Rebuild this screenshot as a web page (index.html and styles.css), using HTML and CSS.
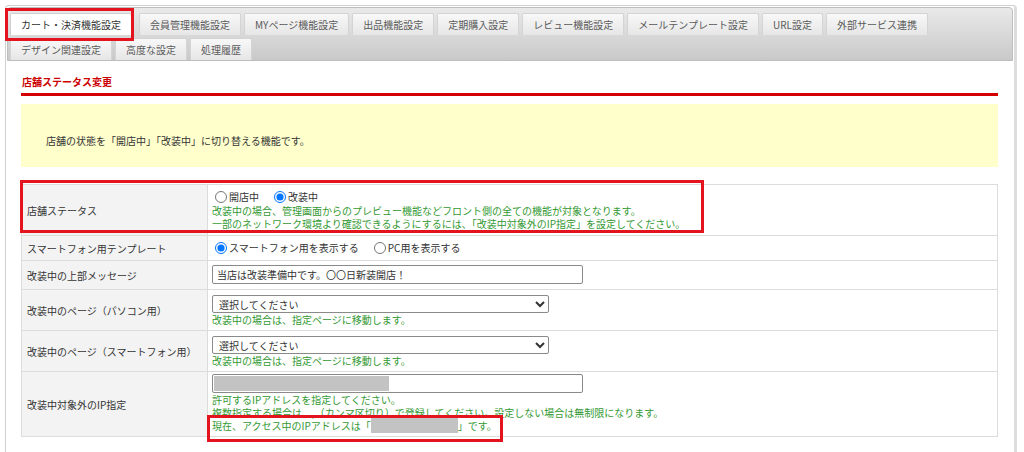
FILE: index.html
```html
<!DOCTYPE html>
<html lang="ja">
<head>
<meta charset="utf-8">
<title>店舗ステータス変更</title>
<link rel="stylesheet" href="styles.css">
</head>
<body>
<div class="page">
  <div class="tabbar">
    <div class="tabrow">
      <div class="tab active">カート・決済機能設定</div>
      <div class="tab gap-after-active">会員管理機能設定</div>
      <div class="tab">MYページ機能設定</div>
      <div class="tab">出品機能設定</div>
      <div class="tab">定期購入設定</div>
      <div class="tab">レビュー機能設定</div>
      <div class="tab">メールテンプレート設定</div>
      <div class="tab">URL設定</div>
      <div class="tab">外部サービス連携</div>
    </div>
    <div class="tabrow">
      <div class="tab">デザイン関連設定</div>
      <div class="tab">高度な設定</div>
      <div class="tab">処理履歴</div>
    </div>
  </div>

  <div class="content">
    <h2 class="title">店舗ステータス変更</h2>
    <div class="notice">店舗の状態を「開店中」「改装中」に切り替える機能です。</div>

    <table class="form">
      <tr class="r1">
        <th>店舗ステータス</th>
        <td>
          <div class="radios">
            <label><input type="radio" name="st">開店中</label>
            <label><input type="radio" name="st" checked>改装中</label>
          </div>
          <p class="note">改装中の場合、管理画面からのプレビュー機能などフロント側の全ての機能が対象となります。</p>
          <p class="note">一部のネットワーク環境より確認できるようにするには、「改装中対象外のIP指定」を設定してください。</p>
        </td>
      </tr>
      <tr class="r2">
        <th>スマートフォン用テンプレート</th>
        <td>
          <div class="radios">
            <label><input type="radio" name="tp" checked>スマートフォン用を表示する</label>
            <label><input type="radio" name="tp">PC用を表示する</label>
          </div>
        </td>
      </tr>
      <tr class="r3">
        <th>改装中の上部メッセージ</th>
        <td><input class="text" type="text" value="当店は改装準備中です。〇〇日新装開店！"></td>
      </tr>
      <tr class="r4">
        <th>改装中のページ（パソコン用）</th>
        <td>
          <select class="sel"><option>選択してください</option></select>
          <p class="note">改装中の場合は、指定ページに移動します。</p>
        </td>
      </tr>
      <tr class="r4">
        <th>改装中のページ（スマートフォン用）</th>
        <td>
          <select class="sel"><option>選択してください</option></select>
          <p class="note">改装中の場合は、指定ページに移動します。</p>
        </td>
      </tr>
      <tr class="r6">
        <th>改装中対象外のIP指定</th>
        <td>
          <div class="ipbox"><span class="redact-in"></span></div>
          <p class="note">許可するIPアドレスを指定してください。</p>
          <p class="note">複数指定する場合は、,（カンマ区切り）で登録してください。設定しない場合は無制限になります。</p>
          <p class="note">現在、アクセス中のIPアドレスは「<span class="redact-txt"></span>」です。</p>
        </td>
      </tr>
    </table>
  </div>

  <div class="mark mark-tab"></div>
  <div class="mark mark-row"></div>
  <div class="mark mark-ip"></div>
</div>
</body>
</html>
```

FILE: styles.css
```css
* { box-sizing: border-box; }

html, body {
  margin: 0;
  padding: 0;
  background: #fff;
}

body {
  font-family: "Noto Sans CJK JP", "Noto Sans", sans-serif;
  font-size: 10px;
  line-height: 13px;
  color: #333;
}

.page {
  position: relative;
  margin: 5px 0 0 5px;
  width: 1012px;
  height: 460px;
  border: 1px solid #cfcfcf;
  border-right: 3px solid #dcdcdc;
  border-bottom: none;
  border-radius: 4px 4px 0 0;
  padding: 1px 1px 0 1px;
}

/* ---------- tabs ---------- */
.tabbar {
  background: linear-gradient(#e9e9e9, #c9c9c9);
  border: 1px solid #bdbdbd;
  border-radius: 4px 4px 0 0;
  padding: 5px 3px 0 2px;
  display: flex;
  flex-direction: column;
  gap: 3px;
}

.tabrow {
  display: flex;
  gap: 3px;
}

.tab {
  height: 22px;
  line-height: 22px;
  padding: 0 10px;
  color: #5a5a5a;
  background: linear-gradient(#f8f8f8, #e6e6e6);
  border: 1px solid #d4d4d4;
  border-bottom: none;
  border-radius: 2px 2px 0 0;
  white-space: nowrap;
}

.tab.active {
  background: #fff;
  color: #333;
  border-color: #d0d0d0;
}

.tab.gap-after-active {
  margin-left: 4px;
}

/* ---------- content ---------- */
.content {
  padding: 0 15px 0 14px;
}

.title {
  margin: 14px 0 0 0;
  padding: 0 0 5px 1px;
  font-size: 10px;
  line-height: 13px;
  font-weight: bold;
  color: #cc0000;
  border-bottom: 3px solid #d40000;
}

.notice {
  margin-top: 8px;
  height: 63px;
  padding: 30px 25px 0 25px;
  background: #ffffcc;
  color: #333;
}

.form {
  margin-top: 17px;
  width: 100%;
  border-collapse: collapse;
  border: 1px solid #dcdcdc;
}

.form th,
.form td {
  border: 1px solid #dcdcdc;
  vertical-align: middle;
  text-align: left;
  font-weight: normal;
}

.form th {
  width: 186px;
  background: #f3f3f3;
  padding: 0 5px;
  color: #333;
}

.form td {
  padding: 5px 5px 5px 4px;
}

.form tr.r3 td {
  padding-top: 4px;
}

.form tr.r4 td {
  padding-bottom: 4px;
}

.form tr.r6 td {
  padding-top: 2px;
  padding-bottom: 4px;
}

.radios {
  height: 14px;
  line-height: 14px;
  display: flex;
  align-items: center;
  white-space: nowrap;
}

.radios label {
  display: inline-flex;
  align-items: center;
  margin-right: 12px;
}

.radios input {
  width: 12px;
  height: 12px;
  margin: 0 2px 0 3px;
}

.note {
  margin: 0;
  height: 13px;
  color: #339933;
  white-space: nowrap;
}

.text {
  display: block;
  width: 371px;
  height: 19px;
  margin: 0;
  padding: 0 4px;
  border: 1px solid #8a8a8a;
  border-radius: 2px;
  font-family: inherit;
  font-size: 10px;
  color: #333;
}

.sel {
  display: block;
  width: 337px;
  height: 18px;
  margin: 0;
  padding: 0 2px;
  border: 1px solid #8a8a8a;
  border-radius: 2px;
  background: #fff;
  font-family: inherit;
  font-size: 10px;
  color: #333;
}

.ipbox {
  width: 371px;
  height: 19px;
  border: 1px solid #8a8a8a;
  border-radius: 2px;
  padding: 1px;
}

.redact-in {
  display: block;
  width: 175px;
  height: 15px;
  background: #c3c3c3;
}

.redact-txt {
  display: inline-block;
  width: 87px;
  height: 15px;
  margin: -1px 0;
  background: #c3c3c3;
  vertical-align: top;
}

/* ---------- annotation marks ---------- */
.mark {
  position: absolute;
  border: 3px solid #e3141e;
  pointer-events: none;
}

.mark-tab {
  left: -1px;
  top: 2px;
  width: 129px;
  height: 33px;
}

.mark-row {
  left: 14px;
  top: 174px;
  width: 684px;
  height: 53px;
}

.mark-ip {
  left: 201px;
  top: 409px;
  width: 296px;
  height: 27px;
}
```
